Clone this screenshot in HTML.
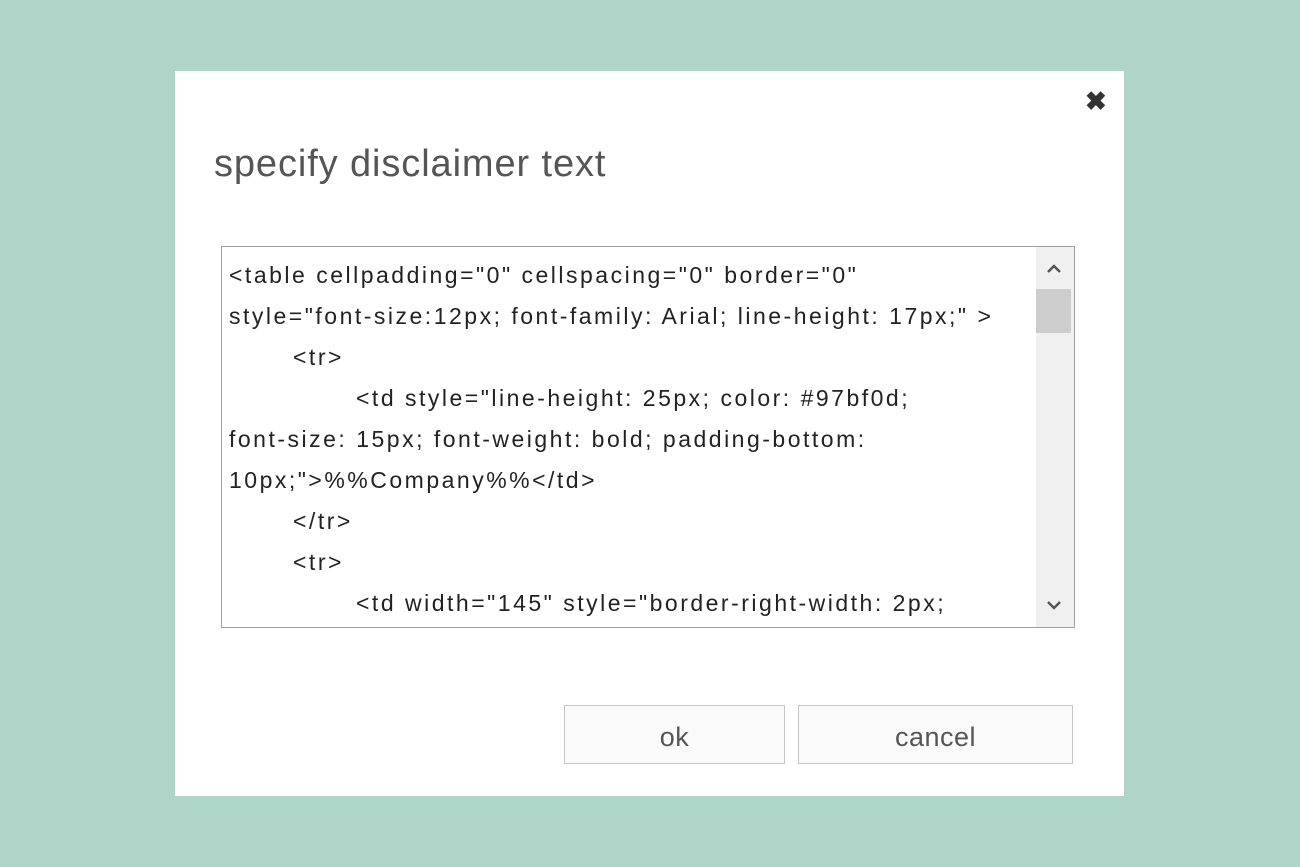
<!DOCTYPE html>
<html><head><style>
body{margin:0;width:1300px;height:867px;background:#afd5c8;position:relative;overflow:hidden;font-family:"Liberation Sans",sans-serif}
.dlg{position:absolute;left:175px;top:71px;width:949px;height:725px;background:#fff}
.x{position:absolute;left:1085px;top:86px;font-size:26px;font-weight:bold;color:#333}
h1{position:absolute;left:214px;top:143px;margin:0;font-weight:normal;font-size:38px;color:#555;letter-spacing:0.9px}
.ta{position:absolute;left:221px;top:246px;width:852px;height:380px;border:1px solid #a0a0a0;background:#fff;overflow:hidden}
.txt{position:absolute;left:7px;top:8px;font-size:23px;line-height:41px;color:#222;white-space:pre;letter-spacing:2.5px}
.i1{padding-left:64px}.i2{padding-left:127px}
.sb{position:absolute;left:814px;top:0;width:38px;height:380px;background:#f0f0f0}
.th{position:absolute;left:0;top:42px;width:35px;height:44px;background:#cdcdcd}
.btn{position:absolute;top:705px;height:57px;border:1px solid #c6c6c6;background:#fafafa;color:#555;font-size:27px;text-align:center;line-height:62px;letter-spacing:0.5px}
</style></head><body>
<div class="dlg"></div>
<div class="x">✖</div>
<h1>specify disclaimer text</h1>
<div class="ta">
<div class="txt">&lt;table cellpadding="0" cellspacing="0" border="0"
style="font-size:12px; font-family: Arial; line-height: 17px;" &gt;
<span class="i1">&lt;tr&gt;</span>
<span class="i2">&lt;td style="line-height: 25px; color: #97bf0d;</span>
font-size: 15px; font-weight: bold; padding-bottom:
10px;"&gt;%%Company%%&lt;/td&gt;
<span class="i1">&lt;/tr&gt;</span>
<span class="i1">&lt;tr&gt;</span>
<span class="i2">&lt;td width="145" style="border-right-width: 2px;</span></div>
<div class="sb"><svg style="position:absolute;left:10px;top:16px" width="16" height="12"><path d="M2 9 L8 3 L14 9" stroke="#555" stroke-width="2.5" fill="none"/></svg><div class="th"></div><svg style="position:absolute;left:10px;top:352px" width="16" height="12"><path d="M2 3 L8 9 L14 3" stroke="#555" stroke-width="2.5" fill="none"/></svg></div>
</div>
<div class="btn" style="left:564px;width:219px">ok</div>
<div class="btn" style="left:798px;width:273px">cancel</div>
</body></html>
